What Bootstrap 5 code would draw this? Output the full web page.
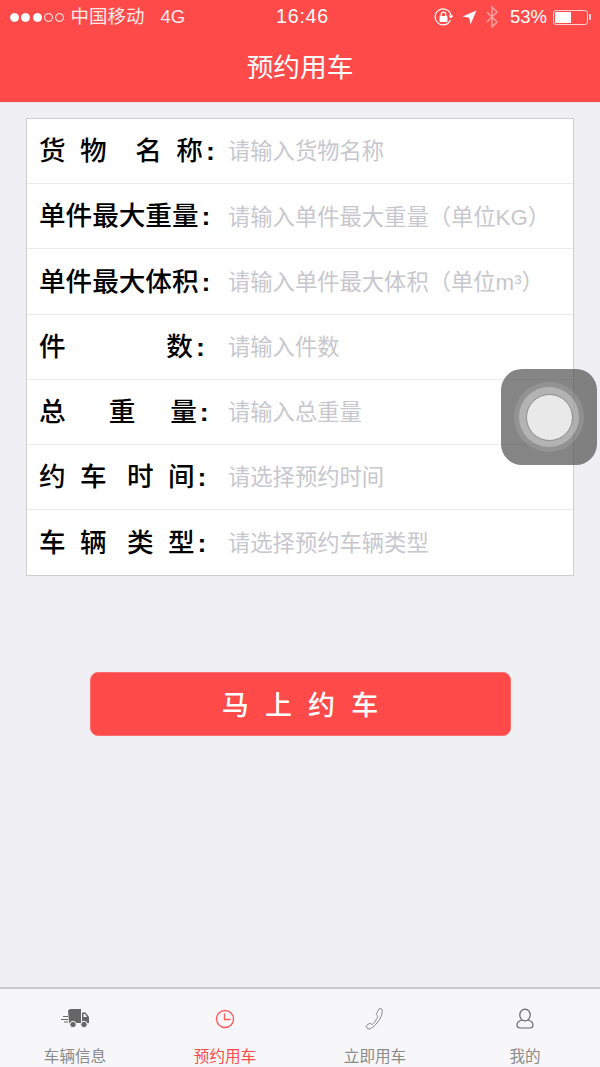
<!DOCTYPE html>
<html lang="zh-CN">
<head>
    <meta charset="UTF-8">
    <meta name="viewport" content="width=device-width, initial-scale=1.0">
    <title>预约用车</title>
    <link href="https://cdn.jsdelivr.net/npm/bootstrap@5.3.0/dist/css/bootstrap.min.css" rel="stylesheet">
    <style>
        body {
            background-color: #efeff4;
            font-family: "Liberation Sans", "Noto Sans CJK SC", sans-serif;
        }

        .phone-screen {
            height: 1067px;
            overflow: hidden;
        }

        .app-head {
            background-color: #ff4a4a;
            height: 103px;
            border-bottom: 1px solid #e8e0e4;
        }

        .status-row {
            height: 34px;
            padding: 0 9px 0 10px;
            font-size: 18.5px;
            color: #fff;
        }

        .status-left {
            width: 220px;
            color: #ffe9e9;
        }

        .status-time {
            margin-left: 4px;
            font-size: 19.5px;
            font-weight: 500;
            letter-spacing: .8px;
        }

        .status-right {
            width: 220px;
            gap: 9px;
        }

        .status-pct {
            margin-left: 3px;
        }

        .sig-dot {
            width: 9px;
            height: 9px;
            margin-right: 2.3px;
            border-radius: 50%;
            border: 1px solid #fff;
        }

        .sig-on {
            background-color: #fff;
        }

        .batt-wrap {
            margin-left: -3px;
        }

        .batt-box {
            width: 35px;
            height: 15px;
            border: 1px solid #ffd0d0;
            border-radius: 3px;
            padding: 1px;
        }

        .batt-fill {
            height: 100%;
            background-color: #fff;
        }

        .batt-tip {
            width: 2px;
            height: 6px;
            margin-left: 1px;
            background-color: #ffd0d0;
        }

        .head-title {
            font-size: 26.7px;
            line-height: 40px;
            margin-top: 14px;
            color: #fff;
        }

        .order-form {
            margin: 15px 26px 0;
            background-color: #fff;
            border: 1px solid #cfcfd3;
        }

        .form-line {
            height: 65.2px;
            padding-top: 2px;
            padding-left: 12px;
            border-bottom: 1px solid #ececf0;
        }

        .form-line:last-child {
            border-bottom: 0;
        }

        .line-label {
            width: 189px;
            flex: none;
            margin: 0;
            font-size: 26.6px;
            font-weight: 500;
            color: #000;
            white-space: pre;
            word-spacing: 7px;
        }

        .label-nudge {
            margin-left: 6px;
        }

        .label-colon {
            margin-left: 3px;
            font-weight: 700;
        }

        .line-input.form-control {
            padding: 0;
            border: 0;
            border-radius: 0;
            background: transparent;
            box-shadow: none;
            font-size: 22.3px;
        }

        .line-input.form-control::placeholder {
            color: #c7c7cd;
        }

        .submit-btn.btn {
            display: block;
            width: 421px;
            height: 64px;
            margin: 95.5px auto 0;
            padding-top: 10px;
            background-color: #ff4a4a;
            border: 1px solid #ff6a6a;
            border-radius: 8px;
            color: #fff;
            font-size: 27px;
            font-weight: 500;
            white-space: pre;
            word-spacing: 8.700px;
        }

        .tab-strip {
            height: 80px;
            background-color: #f7f7f9;
            border-top: 2px solid #c9c9cc;
        }

        .tab-cell {
            color: #8a8a8a;
            font-size: 15.6px;
            line-height: 20px;
        }

        .tab-cell svg {
            display: block;
            margin: 18px auto 16px;
        }

        .tab-active {
            color: #ff4a4a;
        }

        .touch-box {
            position: absolute;
            left: 501px;
            top: 369px;
            width: 96px;
            height: 96px;
            border-radius: 21px;
            background-color: rgba(70, 70, 70, .66);
        }

        .touch-ring {
            width: 70px;
            height: 70px;
            border-radius: 50%;
            background-color: rgba(255, 255, 255, .12);
        }

        .touch-ring-mid {
            width: 60px;
            height: 60px;
            border-radius: 50%;
            background-color: rgba(255, 255, 255, .3);
        }

        .touch-core {
            width: 47px;
            height: 47px;
            border-radius: 50%;
            background-color: #e9e9e9;
            border: 1px solid #8c8c8c;
        }
    </style>
</head>
<body>
<div class="phone-screen position-relative d-flex flex-column">
    <header class="app-head flex-shrink-0">
        <div class="status-row d-flex align-items-center justify-content-between">
            <div class="status-left d-flex align-items-center text-nowrap">
                <span class="sig-dot sig-on"></span><span class="sig-dot sig-on"></span><span class="sig-dot sig-on"></span><span class="sig-dot"></span><span class="sig-dot"></span>
                <span class="ms-1">中国移动</span><span class="ms-3">4G</span>
            </div>
            <div class="status-time">16:46</div>
            <div class="status-right d-flex align-items-center justify-content-end">
                <svg width="19" height="19" viewBox="0 0 19 19" fill="none">
                    <path d="M16.5 12A8 8 0 1 1 17 7.5" stroke="#fff" stroke-width="1.2"/>
                    <path d="M14.5 7.5h5l-2.5 3z" fill="#fff"/>
                    <rect x="5.5" y="8" width="8" height="6" rx="1" fill="#fff"/>
                    <path d="M7.2 8V6.5a2.3 2.3 0 0 1 4.6 0V8" stroke="#fff" stroke-width="1.2"/>
                </svg>
                <svg width="15" height="15" viewBox="0 0 15 15"><path d="M14.5.5 8.5 14.5 7.2 7.8.5 6.5z" fill="#fff"/></svg>
                <svg width="12" height="22" viewBox="0 0 12 22" fill="none"><path d="M1 6l10 10-5 5V1l5 5L1 16" stroke="#ffa0a0" stroke-width="1.5"/></svg>
                <span class="status-pct">53%</span>
                <div class="batt-wrap d-flex align-items-center">
                    <div class="batt-box"><div class="batt-fill" style="width: 53%"></div></div>
                    <div class="batt-tip"></div>
                </div>
            </div>
        </div>
        <div class="head-title text-center">预约用车</div>
    </header>

    <form class="order-form">
        <div class="form-line d-flex align-items-center"><label class="line-label">货 物  名 称<span class="label-colon">:</span></label><input class="line-input form-control" type="text" placeholder="请输入货物名称"></div>
        <div class="form-line d-flex align-items-center"><label class="line-label">单件最大重量<span class="label-colon">:</span></label><input class="line-input form-control" type="text" placeholder="请输入单件最大重量（单位KG）"></div>
        <div class="form-line d-flex align-items-center"><label class="line-label">单件最大体积<span class="label-colon">:</span></label><input class="line-input form-control" type="text" placeholder="请输入单件最大体积（单位m³）"></div>
        <div class="form-line d-flex align-items-center"><label class="line-label">件       数<span class="label-colon">:</span></label><input class="line-input form-control" type="text" placeholder="请输入件数"></div>
        <div class="form-line d-flex align-items-center"><label class="line-label">总   重  <span class="label-nudge">量</span><span class="label-colon">:</span></label><input class="line-input form-control" type="text" placeholder="请输入总重量"></div>
        <div class="form-line d-flex align-items-center"><label class="line-label">约 车 <span class="label-nudge">时</span> 间<span class="label-colon">:</span></label><input class="line-input form-control" type="text" placeholder="请选择预约时间"></div>
        <div class="form-line d-flex align-items-center"><label class="line-label">车 辆 <span class="label-nudge">类</span> 型<span class="label-colon">:</span></label><input class="line-input form-control" type="text" placeholder="请选择预约车辆类型"></div>
    </form>

    <button class="submit-btn btn" type="button">马 上 约 车</button>

    <nav class="tab-strip d-flex mt-auto text-center">
        <div class="tab-cell flex-fill w-25">
            <svg width="30" height="24" viewBox="0 0 30 24" fill="#666">
                <path d="M8 3.500 10 2h11v14H9zM22 5.500h3.500l3.500 4.500v6h-7z"/>
                <path d="M23.500 7h1.500l2 3h-3.500z" fill="#f7f7f9"/>
                <path d="M3 9h5v1.100H3zM1 12h7v1.100H1zM4 14.500h4v1.100H4z"/>
                <circle cx="13" cy="17.500" r="3.200" stroke="#f7f7f9"/>
                <circle cx="24" cy="17.500" r="3.200" stroke="#f7f7f9"/>
            </svg>
            车辆信息
        </div>
        <div class="tab-cell tab-active flex-fill w-25">
            <svg width="24" height="24" viewBox="0 0 24 24" fill="none" stroke="#ff5a5a" stroke-width="1.3">
                <circle cx="12" cy="12" r="8.5"/>
                <path d="M11.5 6.500v6h6"/>
            </svg>
            预约用车
        </div>
        <div class="tab-cell flex-fill w-25">
            <svg width="24" height="24" viewBox="0 0 24 24" fill="none" stroke="#777" stroke-width=".9">
                <path d="M16 2c1-.8 2.800-.5 3 .5 1 4-1.500 9.500-5 13.500-2.500 3-6 6-8 6-1.500 0-3-1.800-2.800-2.800.2-.8 3.300-3 4-2.900.8.100 1.100 1.300 2 1.200 1.200-.2 5.500-6.500 5.500-8 0-1-1.400-1-1.300-2 .1-.9 1.800-4.400 2.600-5.500z"/>
            </svg>
            立即用车
        </div>
        <div class="tab-cell flex-fill w-25">
            <svg width="24" height="24" viewBox="0 0 24 24" fill="none" stroke="#666" stroke-width="1.2">
                <ellipse cx="12" cy="8" rx="5.200" ry="5.800"/>
                <path d="M9 13c-3 .8-5 2.500-5 5 0 2 1.500 3 3.500 3h9c2 0 3.500-1 3.500-3 0-2.500-2-4.200-5-5"/>
            </svg>
            我的
        </div>
    </nav>

    <div class="touch-box d-flex align-items-center justify-content-center">
        <div class="touch-ring d-flex align-items-center justify-content-center">
            <div class="touch-ring-mid d-flex align-items-center justify-content-center">
                <div class="touch-core"></div>
            </div>
        </div>
    </div>
</div>
<script src="https://cdn.jsdelivr.net/npm/bootstrap@5.3.0/dist/js/bootstrap.bundle.min.js"></script>
</body>
</html>
